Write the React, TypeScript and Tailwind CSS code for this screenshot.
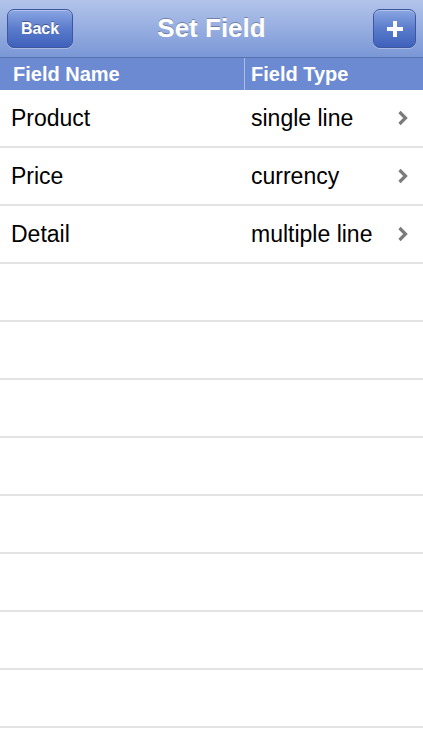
const fields = [
  { name: "Product", type: "single line" },
  { name: "Price", type: "currency" },
  { name: "Detail", type: "multiple line" },
];

const emptyRows = Array.from({ length: 9 });

function Chevron() {
  return (
    <svg width="12" height="16" viewBox="0 0 12 16" className="mr-[14px]">
      <path d="M2.5 2 L8.5 8 L2.5 14" fill="none" stroke="#7b7b7b" strokeWidth="3.2" strokeLinecap="butt" strokeLinejoin="miter" />
    </svg>
  );
}

function NavButton({ children, className }: { children: React.ReactNode; className?: string }) {
  return (
    <button
      className={
        "h-[39px] rounded-[7px] border border-[#3d56a0] bg-gradient-to-b from-[#8ba6e2] via-[#5b7ccc] to-[#3f61bb] text-white font-bold shadow-[inset_0_1px_0_rgba(255,255,255,0.35),0_1px_0_rgba(255,255,255,0.3)] [text-shadow:0_-1px_0_rgba(0,0,0,0.35)] flex items-center justify-center " +
        (className ?? "")
      }
    >
      {children}
    </button>
  );
}

export default function App() {
  return (
    <div className="w-[423px] h-[750px] overflow-hidden bg-white font-['Liberation_Sans',Arial,sans-serif]">
      <div className="h-[58px] grid grid-cols-[1fr_auto_1fr] items-center px-[7px] bg-gradient-to-b from-[#b3c4ea] to-[#7a97d6] border-b border-[#5871ae]">
        <div className="flex">
          <NavButton className="w-[66px] text-[16px]">Back</NavButton>
        </div>
        <h1 className="text-white font-bold text-[26px] [text-shadow:0_-1px_0_rgba(0,0,0,0.3)]">Set Field</h1>
        <div className="flex justify-end">
          <NavButton className="w-[43px]">
            <svg width="18" height="18" viewBox="0 0 18 18">
              <path d="M9 1 V17 M1 9 H17" stroke="white" strokeWidth="4" />
            </svg>
          </NavButton>
        </div>
      </div>
      <div className="h-[32px] flex bg-[#6c8ad2] text-white font-bold text-[20px]">
        <div className="w-[245px] pl-[13px] flex items-center border-r border-[#a9bce6]">Field Name</div>
        <div className="pl-[6px] flex items-center">Field Type</div>
      </div>
      {fields.map((f) => (
        <div key={f.name} className="h-[58px] flex items-center border-b-2 border-[#e3e3e3] text-[23px] text-black">
          <div className="w-[251px] pl-[11px]">{f.name}</div>
          <div className="flex-1">{f.type}</div>
          <Chevron />
        </div>
      ))}
      {emptyRows.map((_, i) => (
        <div key={i} className="h-[58px] border-b-2 border-[#e3e3e3]" />
      ))}
    </div>
  );
}
